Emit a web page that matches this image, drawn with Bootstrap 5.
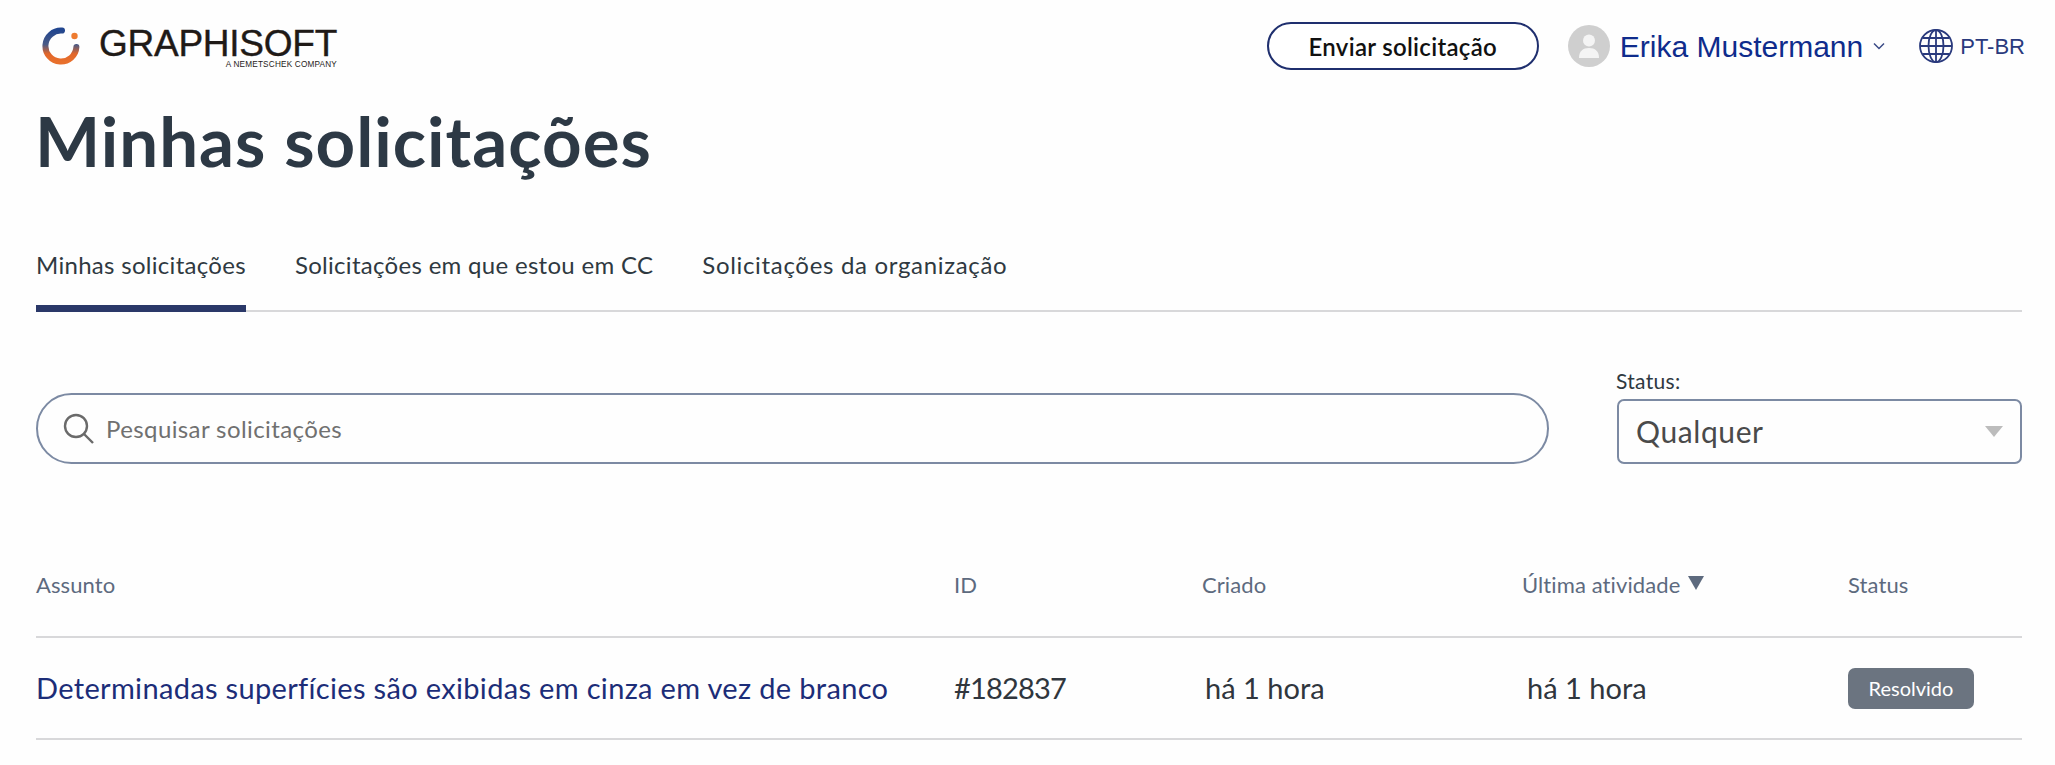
<!doctype html>
<html lang="pt-BR"><head><meta charset="utf-8"><title>Minhas solicitações</title>
<link href="https://cdn.jsdelivr.net/npm/bootstrap@5.3.0/dist/css/bootstrap.min.css" rel="stylesheet">
<style>
body{background:#fefefe;font-family:Lato,"Noto Sans",sans-serif;color:#2f3941;height:765px;overflow:hidden}
.page-wrap{padding:22px 33px 0 36px}
.top-bar{height:48px}
.brand-mark{margin-left:6px;width:38px;height:38px}
.brand-words{margin-left:19px;margin-top:5px;width:238px;line-height:1;color:#1f1a17;font-family:"Liberation Sans",sans-serif}
.brand-name{display:block;font-size:37px;letter-spacing:-.25px;height:33px;line-height:33px;white-space:nowrap;-webkit-text-stroke:.4px #1f1a17}
.brand-sub{display:block;font-size:8.2px;text-align:right;margin-top:1px;letter-spacing:.2px}
.send-btn{width:272px;height:48px;border:2px solid #1f2f6e;border-radius:24px;background:#fff;color:#111;font-size:24px;font-weight:600;letter-spacing:.3px;padding:2px 0 0;margin-right:29px}
.avatar-dot{width:42px;height:42px;border-radius:50%;background:#cfcfcf;margin-right:10px}
.user-name{font-family:"Liberation Sans",sans-serif;font-size:30px;color:#0f2c8c;text-decoration:none;margin-right:10px}
.globe-ico{width:36px;height:36px;margin-left:33px}
.lang-code{font-family:"Liberation Sans",sans-serif;font-size:22px;color:#2a3a7d;margin-left:6px;margin-right:-3px}
.page-title{font-size:69px;font-weight:700;letter-spacing:1px;color:#2d3945;margin:31px 0 0 -1px;line-height:80px}
.tab-row{margin-top:69px;border-bottom:2px solid #d8d8da;gap:49px}
.tab-row .nav-link{color:#2f3941;font-size:24px;letter-spacing:.3px;padding:0 0 25px;line-height:30px;margin-bottom:-2px;border-bottom:7px solid transparent}
.tab-row .nav-link.active{border-bottom-color:#2a3868}
.tab-row .nav-link.wide-tab{letter-spacing:.68px}
.search-block{gap:68px;margin-top:56px}
.search-pill{flex:1;height:71px;border:2px solid #7c8aa3;border-radius:36px;padding-left:25px;gap:12px;margin-top:25px}
.search-pill input{border:0;outline:0;background:transparent;font-size:24px;letter-spacing:.4px;flex:1;padding:0}
.search-pill input::placeholder{color:#707070;opacity:1}
.status-box{width:405px}
.status-box label{font-size:21px;letter-spacing:.3px;line-height:26px;margin-bottom:5px;display:block;color:#2f3941;margin-left:-1px}
.status-pick.form-select{height:65px;border:2px solid #7c8aa3;border-radius:7px;font-size:30px;letter-spacing:.6px;color:#4a4a4a;padding:0 0 0 17px;background-color:transparent;background-image:none}
.pick-wrap::after{content:"";position:absolute;right:19px;top:27px;border-left:9px solid transparent;border-right:9px solid transparent;border-top:11px solid #bcbcbc;pointer-events:none}
.req-table{table-layout:fixed;width:100%;margin:99px 0 0;--bs-table-bg:transparent}
.req-table th{font-size:22px;font-weight:400;letter-spacing:.1px;color:#5d6a7e;height:74px;padding:0 0 31px;border-bottom:2px solid #d8d8da;vertical-align:middle}
.req-table td{height:102px;padding:0;vertical-align:middle;font-size:29px;color:#30363d;border-bottom:2px solid #d8d8da}
.req-table a{color:#1c2d78;text-decoration:none;letter-spacing:.33px}
.ticket-no{letter-spacing:-.8px}
.nudge-a{padding-left:3px!important}.nudge-b{padding-left:5px!important}
.sort-tri{display:inline-block;border-left:8px solid transparent;border-right:8px solid transparent;border-top:14px solid #5d6a7e;margin-left:2px;vertical-align:3px}
.state-tag.badge{width:126px;height:41px;background:#6b7480;border-radius:7px;font-size:20px;font-weight:400;line-height:41px;padding:0;vertical-align:3px}
</style></head><body>
<div class="page-wrap">
<header class="top-bar d-flex align-items-center">
<svg class="brand-mark" viewBox="0 0 38 38" aria-hidden="true"><defs><linearGradient id="rg" x1="0" y1="0" x2="0" y2="1"><stop offset="0" stop-color="#22468f"/><stop offset=".45" stop-color="#4a5a85"/><stop offset=".75" stop-color="#e2662a"/><stop offset="1" stop-color="#e8702c"/></linearGradient></defs><path d="M20 3.6A15.5 15.5 0 1 0 34.4 20" fill="none" stroke="url(#rg)" stroke-width="6" stroke-linecap="round"/><circle cx="32.5" cy="9" r="3.2" fill="#ee7b30"/></svg>
<div class="brand-words"><span class="brand-name">GRAPHISOFT</span><span class="brand-sub">A NEMETSCHEK COMPANY</span></div>
<div class="ms-auto d-flex align-items-center">
<button class="send-btn btn" type="button">Enviar solicitação</button>
<span class="avatar-dot d-inline-flex align-items-center justify-content-center"><svg width="24" height="26" viewBox="0 0 24 26" fill="#f4f4f4"><circle cx="12" cy="7.5" r="6"/><path d="M2 25c0-7 4-10 10-10s10 3 10 10z"/></svg></span>
<a class="user-name" href="#">Erika Mustermann</a>
<svg width="12" height="8" viewBox="0 0 12 8" fill="none" stroke="#3a4a86" stroke-width="1.5"><path d="M1 1.5l5 5 5-5"/></svg>
<svg class="globe-ico" viewBox="0 0 36 36" fill="none" stroke="#2a3a7d" stroke-width="1.8"><circle cx="18" cy="18" r="16"/><ellipse cx="18" cy="18" rx="7.5" ry="16"/><path d="M18 2v32M2 18h32M4.500 10h27M4.500 26h27"/></svg>
<span class="lang-code">PT-BR</span>
</div>
</header>
<h1 class="page-title">Minhas solicitações</h1>
<ul class="nav tab-row">
<li class="nav-item"><a class="nav-link active" href="#">Minhas solicitações</a></li>
<li class="nav-item"><a class="nav-link" href="#">Solicitações em que estou em CC</a></li>
<li class="nav-item"><a class="nav-link wide-tab" href="#">Solicitações da organização</a></li>
</ul>
<div class="search-block d-flex">
<div class="search-pill d-flex align-items-center">
<svg width="31" height="31" viewBox="0 0 31 31" fill="none" stroke="#6a6a6a" stroke-width="2.4"><circle cx="13" cy="13" r="11"/><path d="M21 21l9 9"/></svg>
<input type="text" placeholder="Pesquisar solicitações" aria-label="Pesquisar solicitações">
</div>
<div class="status-box">
<label for="st">Status:</label>
<div class="pick-wrap position-relative"><select id="st" class="form-select status-pick"><option>Qualquer</option></select></div>
</div>
</div>
<table class="table req-table">
<colgroup><col style="width:918px"><col style="width:248px"><col style="width:320px"><col style="width:326px"><col style="width:174px"></colgroup>
<thead><tr><th>Assunto</th><th>ID</th><th>Criado</th><th>Última atividade <span class="sort-tri"></span></th><th>Status</th></tr></thead>
<tbody><tr><td><a href="#">Determinadas superfícies são exibidas em cinza em vez de branco</a></td><td class="ticket-no">#182837</td><td class="nudge-a">há 1 hora</td><td class="nudge-b">há 1 hora</td><td><span class="badge state-tag">Resolvido</span></td></tr></tbody>
</table>
</div>
</body></html>
